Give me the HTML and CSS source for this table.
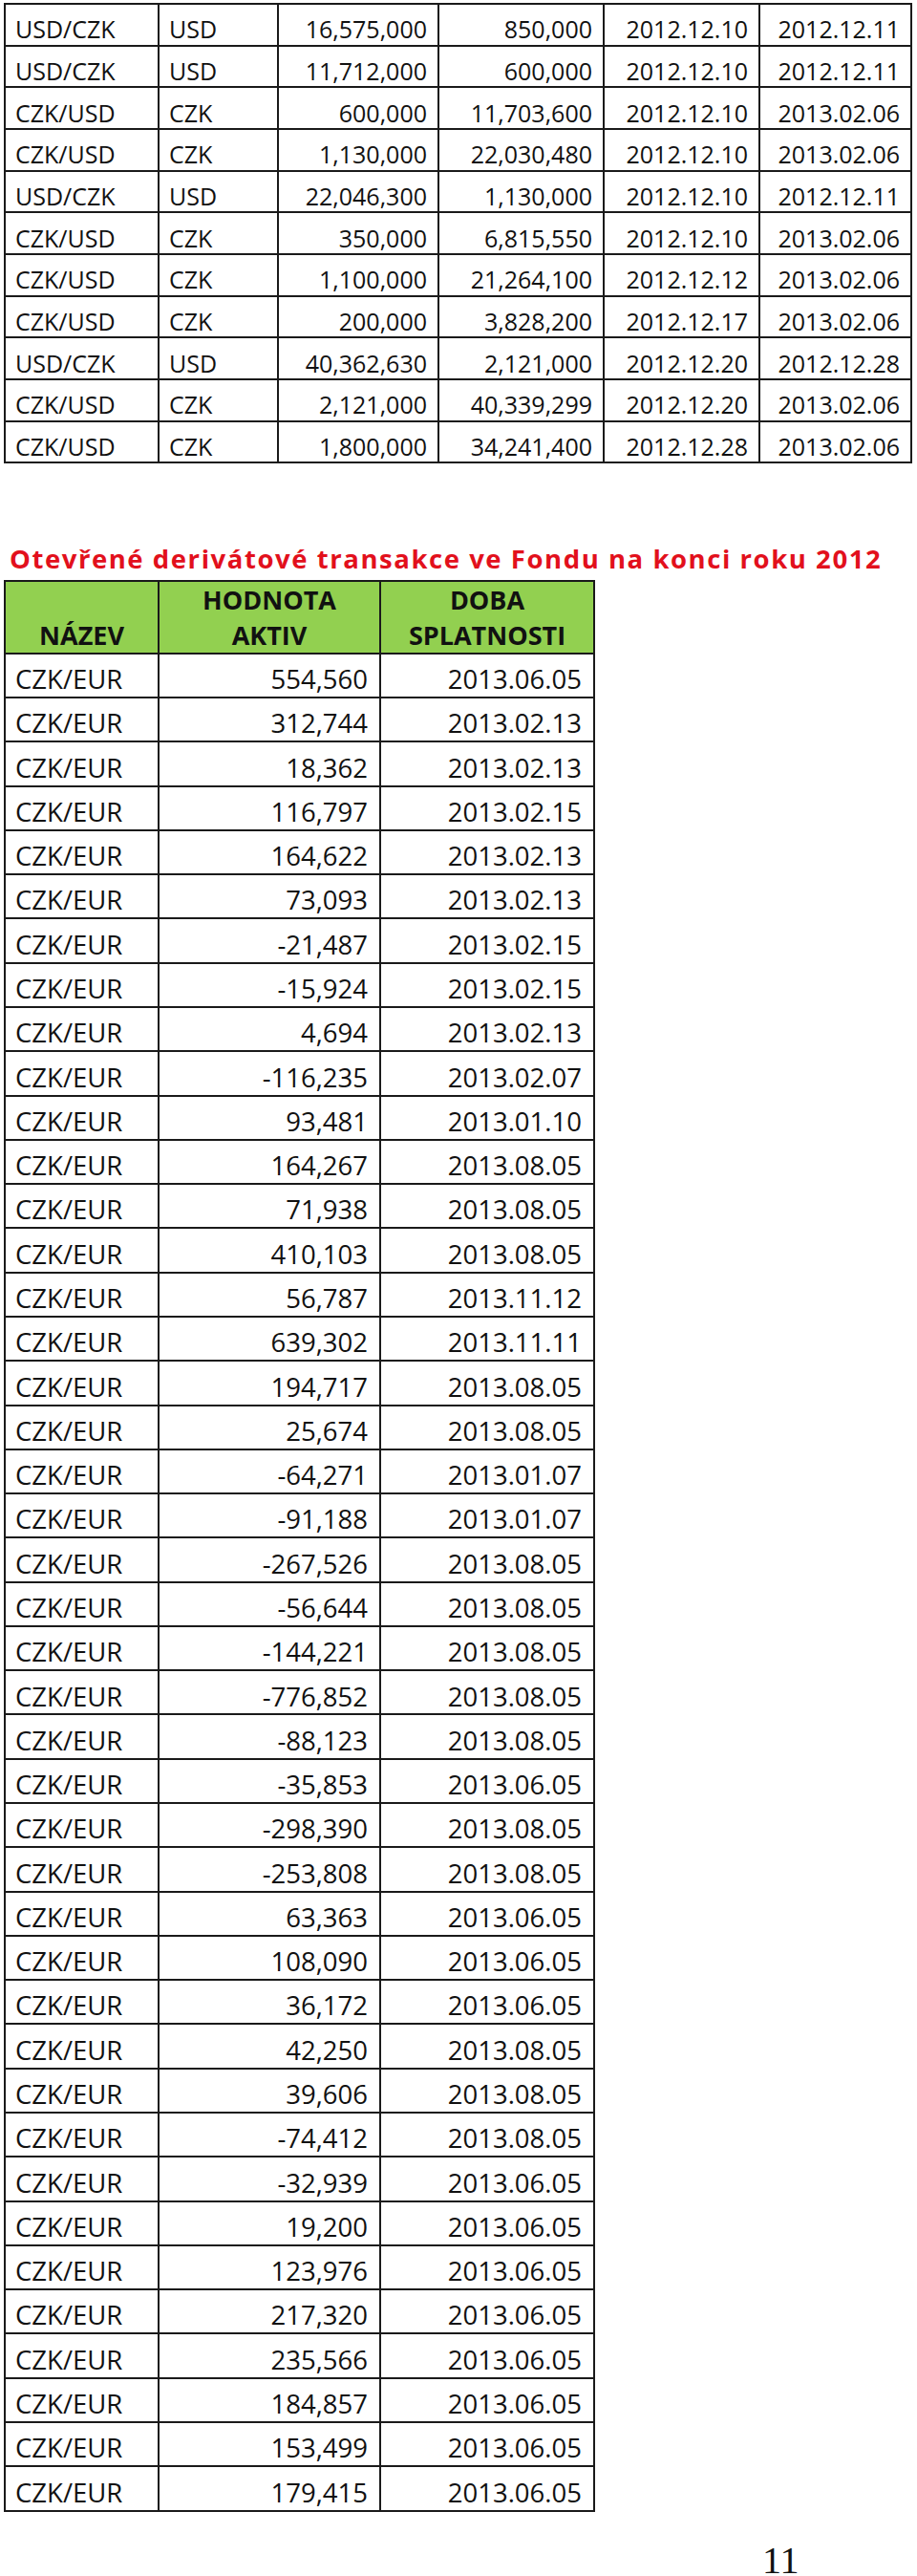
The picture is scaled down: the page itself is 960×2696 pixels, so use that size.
FILE: index.html
```html
<!DOCTYPE html>
<html lang="cs">
<head>
<meta charset="utf-8">
<title>Otevřené derivátové transakce</title>
<link rel="stylesheet" href="styles.css">
</head>
<body>
<main class="page">
  <table class="grid grid-fx">
    <colgroup>
      <col class="c1"><col class="c2"><col class="c3"><col class="c4"><col class="c5"><col class="c6">
    </colgroup>
    <tbody>
      <tr><td>USD/CZK</td><td>USD</td><td class="num">16,575,000</td><td class="num">850,000</td><td class="num">2012.12.10</td><td class="num">2012.12.11</td></tr>
      <tr><td>USD/CZK</td><td>USD</td><td class="num">11,712,000</td><td class="num">600,000</td><td class="num">2012.12.10</td><td class="num">2012.12.11</td></tr>
      <tr><td>CZK/USD</td><td>CZK</td><td class="num">600,000</td><td class="num">11,703,600</td><td class="num">2012.12.10</td><td class="num">2013.02.06</td></tr>
      <tr><td>CZK/USD</td><td>CZK</td><td class="num">1,130,000</td><td class="num">22,030,480</td><td class="num">2012.12.10</td><td class="num">2013.02.06</td></tr>
      <tr><td>USD/CZK</td><td>USD</td><td class="num">22,046,300</td><td class="num">1,130,000</td><td class="num">2012.12.10</td><td class="num">2012.12.11</td></tr>
      <tr><td>CZK/USD</td><td>CZK</td><td class="num">350,000</td><td class="num">6,815,550</td><td class="num">2012.12.10</td><td class="num">2013.02.06</td></tr>
      <tr><td>CZK/USD</td><td>CZK</td><td class="num">1,100,000</td><td class="num">21,264,100</td><td class="num">2012.12.12</td><td class="num">2013.02.06</td></tr>
      <tr><td>CZK/USD</td><td>CZK</td><td class="num">200,000</td><td class="num">3,828,200</td><td class="num">2012.12.17</td><td class="num">2013.02.06</td></tr>
      <tr><td>USD/CZK</td><td>USD</td><td class="num">40,362,630</td><td class="num">2,121,000</td><td class="num">2012.12.20</td><td class="num">2012.12.28</td></tr>
      <tr><td>CZK/USD</td><td>CZK</td><td class="num">2,121,000</td><td class="num">40,339,299</td><td class="num">2012.12.20</td><td class="num">2013.02.06</td></tr>
      <tr><td>CZK/USD</td><td>CZK</td><td class="num">1,800,000</td><td class="num">34,241,400</td><td class="num">2012.12.28</td><td class="num">2013.02.06</td></tr>
    </tbody>
  </table>

  <h2 class="section-title">Otevřené derivátové transakce ve Fondu na konci roku 2012</h2>

  <table class="grid grid-open">
    <colgroup>
      <col class="d1"><col class="d2"><col class="d3">
    </colgroup>
    <thead>
      <tr><th>NÁZEV</th><th>HODNOTA<br>AKTIV</th><th>DOBA<br>SPLATNOSTI</th></tr>
    </thead>
    <tbody>
      <tr><td>CZK/EUR</td><td class="num">554,560</td><td class="num">2013.06.05</td></tr>
      <tr><td>CZK/EUR</td><td class="num">312,744</td><td class="num">2013.02.13</td></tr>
      <tr><td>CZK/EUR</td><td class="num">18,362</td><td class="num">2013.02.13</td></tr>
      <tr><td>CZK/EUR</td><td class="num">116,797</td><td class="num">2013.02.15</td></tr>
      <tr><td>CZK/EUR</td><td class="num">164,622</td><td class="num">2013.02.13</td></tr>
      <tr><td>CZK/EUR</td><td class="num">73,093</td><td class="num">2013.02.13</td></tr>
      <tr><td>CZK/EUR</td><td class="num">-21,487</td><td class="num">2013.02.15</td></tr>
      <tr><td>CZK/EUR</td><td class="num">-15,924</td><td class="num">2013.02.15</td></tr>
      <tr><td>CZK/EUR</td><td class="num">4,694</td><td class="num">2013.02.13</td></tr>
      <tr><td>CZK/EUR</td><td class="num">-116,235</td><td class="num">2013.02.07</td></tr>
      <tr><td>CZK/EUR</td><td class="num">93,481</td><td class="num">2013.01.10</td></tr>
      <tr><td>CZK/EUR</td><td class="num">164,267</td><td class="num">2013.08.05</td></tr>
      <tr><td>CZK/EUR</td><td class="num">71,938</td><td class="num">2013.08.05</td></tr>
      <tr><td>CZK/EUR</td><td class="num">410,103</td><td class="num">2013.08.05</td></tr>
      <tr><td>CZK/EUR</td><td class="num">56,787</td><td class="num">2013.11.12</td></tr>
      <tr><td>CZK/EUR</td><td class="num">639,302</td><td class="num">2013.11.11</td></tr>
      <tr><td>CZK/EUR</td><td class="num">194,717</td><td class="num">2013.08.05</td></tr>
      <tr><td>CZK/EUR</td><td class="num">25,674</td><td class="num">2013.08.05</td></tr>
      <tr><td>CZK/EUR</td><td class="num">-64,271</td><td class="num">2013.01.07</td></tr>
      <tr><td>CZK/EUR</td><td class="num">-91,188</td><td class="num">2013.01.07</td></tr>
      <tr><td>CZK/EUR</td><td class="num">-267,526</td><td class="num">2013.08.05</td></tr>
      <tr><td>CZK/EUR</td><td class="num">-56,644</td><td class="num">2013.08.05</td></tr>
      <tr><td>CZK/EUR</td><td class="num">-144,221</td><td class="num">2013.08.05</td></tr>
      <tr><td>CZK/EUR</td><td class="num">-776,852</td><td class="num">2013.08.05</td></tr>
      <tr><td>CZK/EUR</td><td class="num">-88,123</td><td class="num">2013.08.05</td></tr>
      <tr><td>CZK/EUR</td><td class="num">-35,853</td><td class="num">2013.06.05</td></tr>
      <tr><td>CZK/EUR</td><td class="num">-298,390</td><td class="num">2013.08.05</td></tr>
      <tr><td>CZK/EUR</td><td class="num">-253,808</td><td class="num">2013.08.05</td></tr>
      <tr><td>CZK/EUR</td><td class="num">63,363</td><td class="num">2013.06.05</td></tr>
      <tr><td>CZK/EUR</td><td class="num">108,090</td><td class="num">2013.06.05</td></tr>
      <tr><td>CZK/EUR</td><td class="num">36,172</td><td class="num">2013.06.05</td></tr>
      <tr><td>CZK/EUR</td><td class="num">42,250</td><td class="num">2013.08.05</td></tr>
      <tr><td>CZK/EUR</td><td class="num">39,606</td><td class="num">2013.08.05</td></tr>
      <tr><td>CZK/EUR</td><td class="num">-74,412</td><td class="num">2013.08.05</td></tr>
      <tr><td>CZK/EUR</td><td class="num">-32,939</td><td class="num">2013.06.05</td></tr>
      <tr><td>CZK/EUR</td><td class="num">19,200</td><td class="num">2013.06.05</td></tr>
      <tr><td>CZK/EUR</td><td class="num">123,976</td><td class="num">2013.06.05</td></tr>
      <tr><td>CZK/EUR</td><td class="num">217,320</td><td class="num">2013.06.05</td></tr>
      <tr><td>CZK/EUR</td><td class="num">235,566</td><td class="num">2013.06.05</td></tr>
      <tr><td>CZK/EUR</td><td class="num">184,857</td><td class="num">2013.06.05</td></tr>
      <tr><td>CZK/EUR</td><td class="num">153,499</td><td class="num">2013.06.05</td></tr>
      <tr><td>CZK/EUR</td><td class="num">179,415</td><td class="num">2013.06.05</td></tr>
    </tbody>
  </table>

  <div class="page-number">11</div>
</main>
</body>
</html>
```

FILE: styles.css
```css
html, body {
  margin: 0;
  padding: 0;
  background: #ffffff;
  overflow: hidden;
}

.page {
  padding: 3px 0 0 4px;
  font-family: "Open Sans", "Noto Sans", sans-serif;
  color: #111111;
}

.grid {
  border-collapse: separate;
  border-spacing: 0;
  table-layout: fixed;
  border-top: 2px solid #1a1a1a;
  border-left: 2px solid #1a1a1a;
}

.grid td,
.grid th {
  border-right: 2px solid #1a1a1a;
  border-bottom: 2px solid #1a1a1a;
  white-space: nowrap;
  overflow: hidden;
}

/* first table: FX forwards */
.grid-fx { width: 951px; }
.grid-fx .c1 { width: 161px; }
.grid-fx .c2 { width: 125px; }
.grid-fx .c3 { width: 168px; }
.grid-fx .c4 { width: 173px; }
.grid-fx .c5 { width: 163px; }
.grid-fx .c6 { width: 159px; }

.grid-fx td {
  font-size: 25px;
  line-height: 32px;
  padding: 9.3px 11px 0.37px 10px;
  text-align: left;
}

.grid .num { text-align: right; }

/* title */
.section-title {
  margin: 85px 0 6.5px 0;
  padding-left: 6px;
  font-size: 27.5px;
  line-height: 30px;
  font-weight: 700;
  letter-spacing: 1.55px;
  color: #e2101c;
  white-space: nowrap;
}

/* second table: open derivative positions */
.grid-open { width: 619px; }
.grid-open .d1 { width: 161px; }
.grid-open .d2 { width: 232px; }
.grid-open .d3 { width: 224px; }

.grid-open th {
  background: #92d050;
  font-size: 27px;
  line-height: 37px;
  font-weight: 700;
  padding: 0;
  text-align: center;
  vertical-align: bottom;
  color: #111111;
}

.grid-open td {
  font-size: 27.5px;
  line-height: 34px;
  padding: 9.33px 12px 0.96px 10px;
}

.page-number {
  margin-top: 37px;
  padding-left: 794px;
  font-family: "Liberation Serif", "Times New Roman", serif;
  font-size: 40px;
  line-height: 28px;
  color: #111111;
}
```
